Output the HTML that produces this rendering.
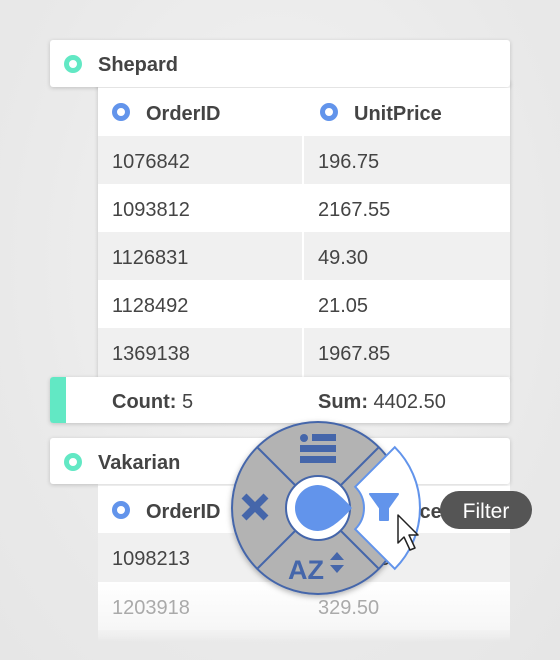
<!DOCTYPE html>
<html><head><meta charset="utf-8"><style>
*{margin:0;padding:0;box-sizing:border-box}
body{width:560px;height:660px;overflow:hidden;background:radial-gradient(ellipse at 50% 40%,#f3f3f3 0%,#e9e9e9 70%,#e6e6e6 100%);font-family:"Liberation Sans",sans-serif;position:relative}
.abs{position:absolute}
.card{position:absolute;background:#fff;border-radius:3px;box-shadow:0 1px 4px rgba(0,0,0,.18)}
.hdr{font-weight:bold;font-size:20px;color:#444}
.dot{position:absolute;width:18px;height:18px;border-radius:50%;border:5px solid #62e8c4;background:#fff}
.bdot{position:absolute;width:18px;height:18px;border-radius:50%;border:5px solid #6294eb;background:#fff}
.row{position:absolute;left:98px;width:412px;height:48px;font-size:20px;color:#444}
.row span{position:absolute;top:15px}
.g{background:#f0f0f0}
.w{background:#fff}
</style></head><body>
<div class="card" style="left:98px;top:80px;width:412px;height:300px"></div>
<div class="card" style="left:50px;top:40px;width:460px;height:47px"></div>
<div class="dot" style="left:64px;top:55px"></div>
<div class="abs hdr" style="left:98px;top:54px">Shepard</div>
<div class="row w" style="top:88px;height:47px"><div class="bdot" style="left:14px;top:15px"></div><span class="hdr" style="left:48px;top:15px">OrderID</span><div class="bdot" style="left:222px;top:15px"></div><span class="hdr" style="left:256px;top:15px">UnitPrice</span></div>
<div class="row g" style="top:136px"><span style="left:14px">1076842</span><span style="left:220px">196.75</span></div>
<div class="row w" style="top:184px"><span style="left:14px">1093812</span><span style="left:220px">2167.55</span></div>
<div class="row g" style="top:232px"><span style="left:14px">1126831</span><span style="left:220px">49.30</span></div>
<div class="row w" style="top:280px"><span style="left:14px">1128492</span><span style="left:220px">21.05</span></div>
<div class="row g" style="top:328px;height:49px"><span style="left:14px">1369138</span><span style="left:220px">1967.85</span></div>
<div class="abs" style="left:302px;top:136px;width:2px;height:241px;background:#fff"></div>
<div class="card" style="left:50px;top:377px;width:460px;height:46px;overflow:hidden"><div class="abs" style="left:0;top:0;width:16px;height:46px;background:#62e8c4"></div>
<div class="abs" style="left:62px;top:14px;font-size:20px;color:#444"><b>Count:</b> 5</div>
<div class="abs" style="left:268px;top:14px;font-size:20px;color:#444"><b>Sum:</b> 4402.50</div></div>
<div class="card" style="left:98px;top:480px;width:412px;height:160px;background:linear-gradient(#fff 0,#fff 100px,#f4f4f4 140px,rgba(240,240,240,0) 160px);box-shadow:none"></div>
<div class="card" style="left:50px;top:438px;width:460px;height:46px"></div>
<div class="dot" style="left:64px;top:453px"></div>
<div class="abs hdr" style="left:98px;top:452px">Vakarian</div>
<div class="row w" style="top:486px;height:46px"><div class="bdot" style="left:14px;top:15px"></div><span class="hdr" style="left:48px;top:15px">OrderID</span><span class="hdr" style="left:256px;top:15px">UnitPrice</span></div>
<div class="row g" style="top:533px;height:49px"><span style="left:14px">1098213</span><span style="left:220px">2167.75</span></div>
<div class="row" style="top:582px;background:linear-gradient(#fff,#f6f6f6);color:#aaa"><span style="left:14px">1203918</span><span style="left:220px">329.50</span></div>
<div class="abs" style="left:98px;top:630px;width:412px;height:12px;background:linear-gradient(#f2f2f2,rgba(235,235,235,0))"></div>
<svg class="abs" style="left:0;top:0" width="560" height="660">
<defs><filter id="sh" x="-20%" y="-20%" width="140%" height="140%"><feDropShadow dx="0" dy="2" stdDeviation="3" flood-opacity=".3"/></filter></defs>
<g transform="translate(318,508)" filter="url(#sh)">
<circle r="86" fill="#b3b3b3" stroke="#4466aa" stroke-width="2"/>
<line x1="-22" y1="-22" x2="-61" y2="-61" stroke="#4466aa" stroke-width="2"/>
<line x1="-22" y1="22" x2="-61" y2="61" stroke="#4466aa" stroke-width="2"/>
<line x1="22" y1="-22" x2="61" y2="-61" stroke="#4466aa" stroke-width="2"/>
<line x1="22" y1="22" x2="61" y2="61" stroke="#4466aa" stroke-width="2"/>
<circle r="32" fill="#fff" stroke="#4466aa" stroke-width="2"/>
<path d="M0,-23 A23,23 0 1,0 0,23 Q14,23 34,0 Q14,-23 0,-23Z" fill="#6294eb"/>
<circle cx="-14" cy="-70" r="4" fill="#4466aa"/>
<rect x="-6" y="-74" width="24" height="7" fill="#4466aa"/>
<rect x="-18" y="-63" width="36" height="7" fill="#4466aa"/>
<rect x="-18" y="-52" width="36" height="7" fill="#4466aa"/>
<path d="M-74,-12 L-52,10 M-52,-12 L-74,10" stroke="#4466aa" stroke-width="7"/>
<text x="-30" y="71" font-family="Liberation Sans,sans-serif" font-weight="bold" font-size="27" fill="#4466aa">AZ</text>
<path d="M12,52 l7,-8 l7,8z M12,57 l7,8 l7,-8z" fill="#4466aa"/>
</g>
<g transform="translate(334,508)">
<path d="M21.2,-21.2 L60.8,-60.8 A86,86 0 0,1 60.8,60.8 L21.2,21.2 A30,30 0 0,0 21.2,-21.2Z" fill="#fff" stroke="#6294eb" stroke-width="2"/>
<path d="M36,-14 L64,-14 L54,0 L54,12 L46,12 L46,0Z" fill="#6294eb" stroke="#6294eb" stroke-width="2" stroke-linejoin="round"/>
</g>
<path d="M398,515 L398,543 L404,537 L410,550 L415,548 L409,535 L418,535Z" fill="#fff" stroke="#222" stroke-width="1.5" stroke-linejoin="round"/>
<rect x="440" y="491" width="92" height="38" rx="19" fill="#555"/>
<text x="486" y="518" text-anchor="middle" font-family="Liberation Sans,sans-serif" font-size="21" fill="#fff">Filter</text>
</svg>
</body></html>
